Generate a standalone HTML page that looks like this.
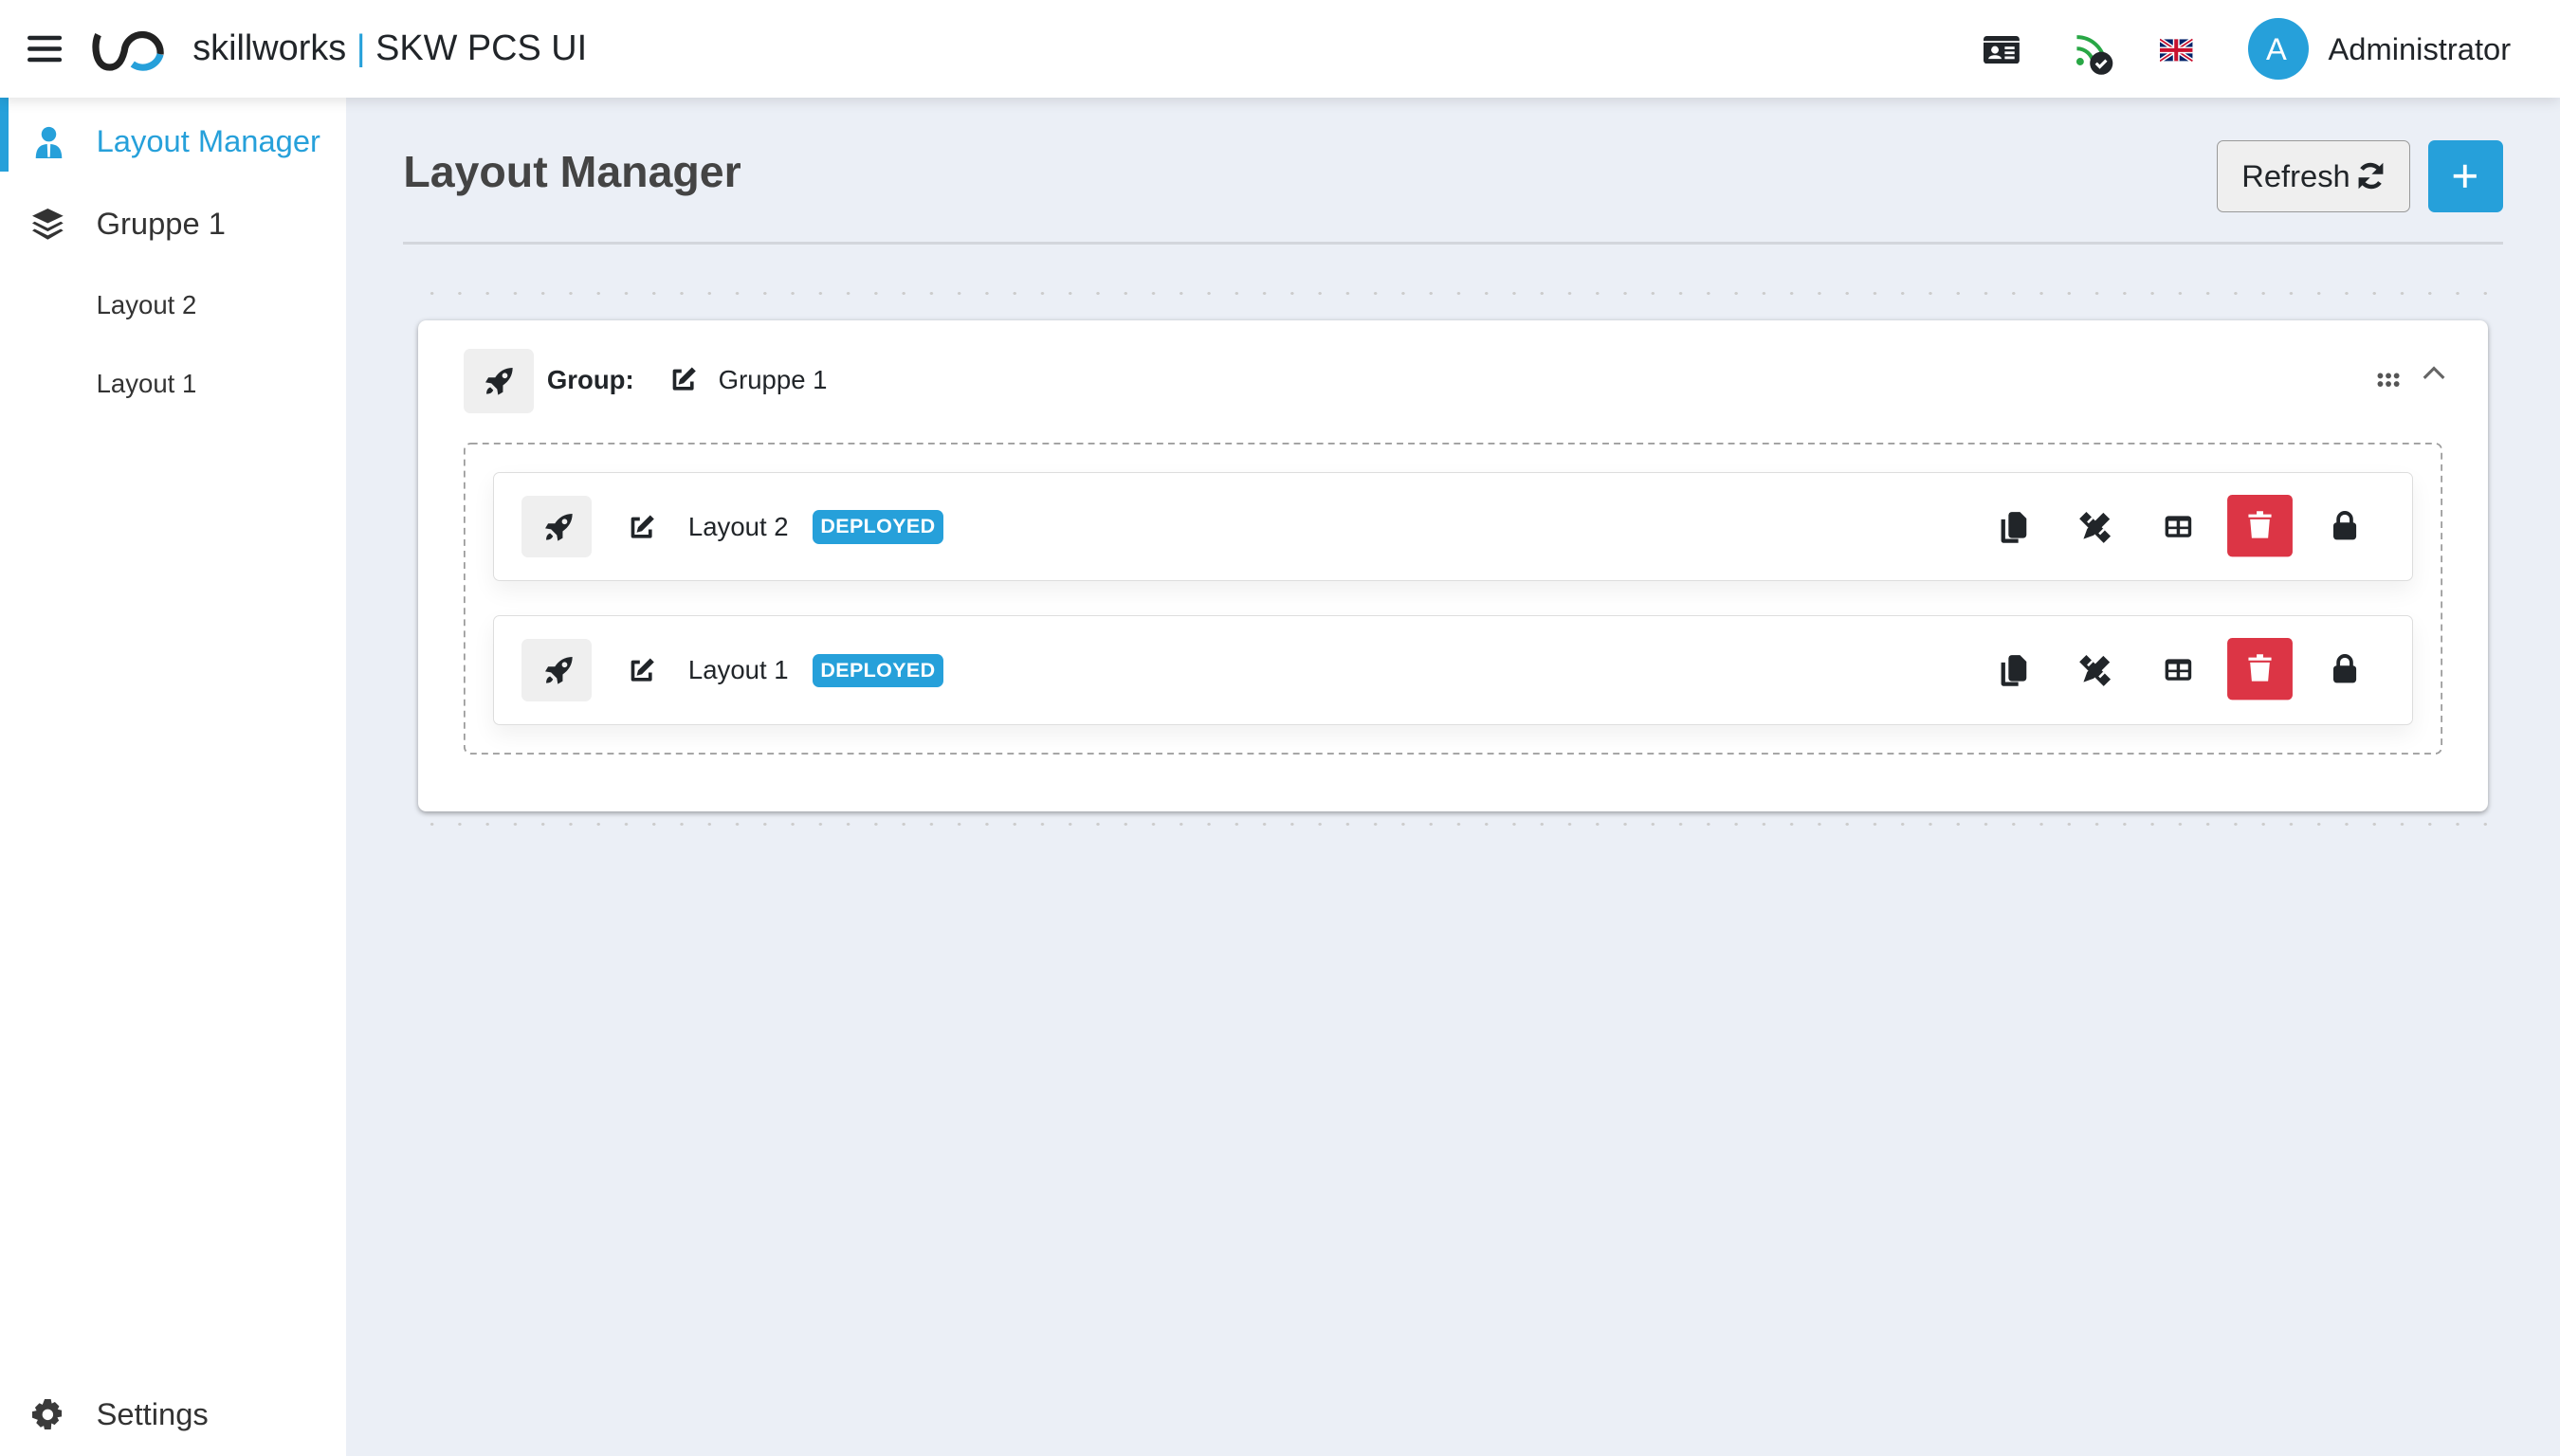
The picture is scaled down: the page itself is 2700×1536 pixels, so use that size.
<!DOCTYPE html>
<html><head><meta charset="utf-8">
<style>
*{box-sizing:border-box;margin:0;padding:0}
html,body{width:2700px;height:1536px;overflow:hidden;background:#ebeff6}
#z{zoom:1.72194;width:1568px;height:892px;position:relative;font-family:"Liberation Sans",Arial,sans-serif;color:#212529;background:#ebeff6}
.abs{position:absolute}
.hdr{left:0;top:0;width:1568px;height:60px;background:#fff;box-shadow:0 2px 8px rgba(0,0,0,.12);z-index:3}
.side{left:0;top:60px;width:212px;height:832px;background:#fff;z-index:2}
.t{position:absolute;white-space:nowrap;line-height:1}
.card{left:256px;top:196px;width:1268px;height:301px;background:#fff;border-radius:5px;box-shadow:0 1px 3px rgba(0,0,0,.35)}
.row{left:302px;width:1176px;height:67px;background:#fff;border:1px solid #ddd;border-radius:4px;box-shadow:0 6px 14px rgba(0,0,0,.06)}
.rb{position:absolute;width:43px;height:38px;background:#efefef;border-radius:4px}
.badge{position:absolute;background:#26a0da;color:#fff;font-weight:bold;font-size:12.5px;border-radius:4px;padding:3px 5px;letter-spacing:.2px}
.dots{height:2px;background:radial-gradient(circle,#ccc 0.9px,transparent 1.1px) 0 0/17px 2px repeat-x}
svg{position:absolute}
</style></head><body><div id="z">
<svg width="0" height="0" style="position:absolute">
<defs>
<symbol id="rocket" viewBox="0 0 16 16"><path fill="#212529" d="M15 1c-4 0-7 2-9 5H2.5L1 8.5l3 .5 3 3 .5 3 2.5-1.5V10c3-2 5-5 5-9zM3.5 11C2 11.5 1.5 13 1.5 14.5 3 14.5 4.5 14 5 12.5z"/><circle cx="11" cy="5" r="1.4" fill="#efefef"/></symbol>
<symbol id="edit" viewBox="0 0 16 16"><path fill="none" stroke="#212529" stroke-width="2" stroke-linejoin="round" d="M7 3H3v10h10V9"/><path fill="#212529" d="M13 .8l2.2 2.2-7 7-3 .8.8-3z"/></symbol>
</defs></svg>

<div class="abs hdr">
 <svg style="left:17px;top:21px" width="21" height="18" viewBox="0 0 21 18"><rect y="1" width="21" height="2.6" rx="1.3" fill="#212529"/><rect y="7.7" width="21" height="2.6" rx="1.3" fill="#212529"/><rect y="14.4" width="21" height="2.6" rx="1.3" fill="#212529"/></svg>
 <svg style="left:55px;top:16px" width="48" height="30" viewBox="0 0 48 30"><path fill="none" stroke="#222" stroke-width="4.2" d="M5 5C2 11 3 25 12 25C18 25 20 19 21 15A11 11 0 0 1 43 17"/><path fill="none" stroke="#26a0da" stroke-width="4.2" d="M43 17A11 11 0 0 1 26 23"/></svg>
 <div class="t" style="left:118px;top:19px;font-size:22px;color:#212529">skillworks <span style="color:#26a0da">|</span> SKW PCS UI</div>
 <svg style="left:1215px;top:22px" width="22" height="17" viewBox="0 0 22 17"><rect width="22" height="17" rx="2" fill="#212529"/><rect x="0" y="3" width="22" height="1" fill="#fff"/><circle cx="7" cy="8.5" r="2.3" fill="#fff"/><path d="M3 14c0-3 8-3 8 0z" fill="#fff"/><rect x="13" y="6.5" width="6" height="1.6" fill="#fff"/><rect x="13" y="9.5" width="6" height="1.6" fill="#fff"/><rect x="13" y="12.5" width="6" height="1.6" fill="#fff"/></svg>
 <svg style="left:1270px;top:20px" width="26" height="28" viewBox="0 0 26 28"><circle cx="4" cy="18" r="2.3" fill="#28a745"/><path fill="none" stroke="#28a745" stroke-width="2.3" d="M2 10a10 10 0 0 1 10 9M2 3a17 17 0 0 1 17 16"/><circle cx="17" cy="19" r="7" fill="#212529"/><path fill="none" stroke="#fff" stroke-width="1.8" d="M13.8 19l2.2 2.2 4-4"/></svg>
 <svg style="left:1323px;top:23px" width="20" height="15" viewBox="0 0 60 40"><rect width="60" height="40" fill="#012169"/><path d="M0 0L60 40M60 0L0 40" stroke="#fff" stroke-width="8"/><path d="M0 0L60 40M60 0L0 40" stroke="#C8102E" stroke-width="3"/><path d="M30 0v40M0 20h60" stroke="#fff" stroke-width="12"/><path d="M30 0v40M0 20h60" stroke="#C8102E" stroke-width="7"/></svg>
 <div class="abs" style="left:1377px;top:11px;width:37px;height:38px;border-radius:50%;background:#26a0da"></div>
 <div class="t" style="left:1388px;top:21px;font-size:19px;color:#fff">A</div>
 <div class="t" style="left:1426px;top:21px;font-size:19px;color:#212529">Administrator</div>
</div>

<div class="abs side">
 <div class="abs" style="left:0;top:0;width:5px;height:45px;background:#26a0da"></div>
 <svg style="left:21px;top:17px" width="18" height="20" viewBox="0 0 18 20"><circle cx="9" cy="5" r="4.5" fill="#26a0da"/><path d="M1 20c0-7 3-9 8-9s8 2 8 9z" fill="#26a0da"/><path d="M8 11h2l-.3 8h-1.4z" fill="#fff"/></svg>
 <div class="t" style="left:59px;top:17px;font-size:19px;color:#26a0da">Layout Manager</div>
 <svg style="left:20px;top:68px" width="19" height="19" viewBox="0 0 19 19"><path d="M9.5 0L19 4.5 9.5 9 0 4.5z" fill="#333"/><path d="M1.5 8l8 4 8-4 1.5 1L9.5 14 0 9z" fill="#333"/><path d="M1.5 12.5l8 4 8-4 1.5 1L9.5 19 0 13.5z" fill="#333"/></svg>
 <div class="t" style="left:59px;top:68px;font-size:19px;color:#333">Gruppe 1</div>
 <div class="t" style="left:59px;top:119px;font-size:16px;color:#333">Layout 2</div>
 <div class="t" style="left:59px;top:167px;font-size:16px;color:#333">Layout 1</div>
 <svg style="left:20px;top:797px" width="19" height="19" viewBox="0 0 20 20"><path fill="#3a3a3a" fill-rule="evenodd" d="M8 0h4l.6 2.8 2-1 2.8 2.8-1 2 2.6.6v4l-2.8.6 1 2-2.8 2.8-2-1L12 20H8l-.6-2.8-2 1-2.8-2.8 1-2L0 12V8l2.8-.6-1-2 2.8-2.8 2 1zM10 6.5a3.5 3.5 0 1 0 0 7 3.5 3.5 0 0 0 0-7z"/></svg>
 <div class="t" style="left:59px;top:797px;font-size:19px;color:#333">Settings</div>
</div>

<div class="t" style="left:247px;top:92px;font-size:27px;font-weight:bold;color:#444">Layout Manager</div>
<div class="abs" style="left:1358px;top:86px;width:118px;height:44px;background:#efefef;border:1px solid #999;border-radius:4px"></div>
<div class="t" style="left:1373px;top:99px;font-size:19px;color:#212529">Refresh</div>
<svg style="left:1443px;top:99px" width="18" height="18" viewBox="0 0 18 18"><path fill="none" stroke="#212529" stroke-width="2.6" d="M15 7A6.5 6.5 0 0 0 3.5 5M3 11a6.5 6.5 0 0 0 11.5 2"/><path fill="#212529" d="M16.5 1v7h-7zM1.5 17v-7h7z"/></svg>
<div class="abs" style="left:1487px;top:86px;width:46px;height:44px;background:#26a0da;border-radius:4px"></div>
<svg style="left:1502px;top:100px" width="16" height="16" viewBox="0 0 16 16"><path d="M8 1v14M1 8h14" stroke="#fff" stroke-width="2.2"/></svg>
<div class="abs" style="left:247px;top:148px;width:1286px;height:2px;background:#d3d6dc"></div>

<div class="abs dots" style="left:256px;top:179px;width:1268px"></div>
<div class="abs dots" style="left:256px;top:504px;width:1268px"></div>

<div class="abs card">
 <div class="rb" style="left:28px;top:18px;height:39px"></div>
 <svg style="left:40px;top:28px" width="19" height="19"><use href="#rocket"/></svg>
 <div class="t" style="left:79px;top:29px;font-size:16px;font-weight:bold">Group:</div>
 <svg style="left:154px;top:28px" width="17" height="17"><use href="#edit"/></svg>
 <div class="t" style="left:184px;top:29px;font-size:16px">Gruppe 1</div>
 <svg style="left:1200px;top:32px" width="14" height="9" viewBox="0 0 14 9"><g fill="#555"><circle cx="2" cy="2" r="1.7"/><circle cx="7" cy="2" r="1.7"/><circle cx="12" cy="2" r="1.7"/><circle cx="2" cy="7" r="1.7"/><circle cx="7" cy="7" r="1.7"/><circle cx="12" cy="7" r="1.7"/></g></svg>
 <svg style="left:1228px;top:28px" width="14" height="9" viewBox="0 0 14 9"><path d="M1 7.5l6-6 6 6" fill="none" stroke="#666" stroke-width="1.8"/></svg>
</div>
<svg style="left:284px;top:271px" width="1212" height="191"><rect x="0.5" y="0.5" width="1211" height="190" rx="4" fill="none" stroke="#999" stroke-width="1" stroke-dasharray="4 3"/></svg>

<div class="abs row" style="top:289px">
 <div class="rb" style="left:17px;top:14px"></div>
 <svg style="left:30px;top:24px" width="19" height="19"><use href="#rocket"/></svg>
 <svg style="left:82px;top:25px" width="17" height="17"><use href="#edit"/></svg>
 <div class="t" style="left:119px;top:25px;font-size:16px">Layout 2</div>
 <div class="badge" style="left:195px;top:23px">DEPLOYED</div>
</div>
<div class="abs row" style="top:377px">
 <div class="rb" style="left:17px;top:14px"></div>
 <svg style="left:30px;top:24px" width="19" height="19"><use href="#rocket"/></svg>
 <svg style="left:82px;top:25px" width="17" height="17"><use href="#edit"/></svg>
 <div class="t" style="left:119px;top:25px;font-size:16px">Layout 1</div>
 <div class="badge" style="left:195px;top:23px">DEPLOYED</div>
</div>

<svg width="0" height="0" style="position:absolute"><defs>
<symbol id="acts" viewBox="0 0 240 40">
 <path fill="#212529" d="M1.5 15h2.5v12h8v2.5H3a1.5 1.5 0 0 1-1.5-1.5z"/><path fill="#212529" d="M6 12.5a2 2 0 0 1 2-2h5l4 4v10a2 2 0 0 1-2 2H8a2 2 0 0 1-2-2z"/>
 <g transform="translate(59,20) rotate(45)"><path fill="#212529" d="M-2.8-10h5.6v14l-2.8 6-2.8-6z"/></g>
 <g transform="translate(59,20) rotate(-45)"><path fill="#212529" d="M-3-10.5h6v21h-6z"/><path fill="#fff" d="M-1 -6h4v1.5h-4zM-1 4h4v1.5h-4z"/></g>
 <rect x="102" y="13" width="16" height="13" rx="2" fill="#212529"/><rect x="104" y="16" width="5" height="3.5" fill="#fff"/><rect x="111" y="16" width="5" height="3.5" fill="#fff"/><rect x="104" y="21" width="5" height="3" fill="#fff"/><rect x="111" y="21" width="5" height="3" fill="#fff"/>
 <rect x="140" y="0" width="40" height="38" rx="3" fill="#dc3545"/>
 <path fill="#fff" d="M153 12h14v1.8h-14zM158 10h4v2h-4zM154 15h12l-1 11.5h-10z"/>
 <path fill="none" stroke="#212529" stroke-width="2.2" d="M208 18v-3a4 4 0 0 1 8 0v3"/><rect x="205" y="17" width="14" height="10.5" rx="2" fill="#212529"/>
</symbol></defs></svg>
<svg style="left:1224px;top:303px" width="240" height="40"><use href="#acts"/></svg>
<svg style="left:1224px;top:391px" width="240" height="40"><use href="#acts"/></svg>

</div></body></html>
